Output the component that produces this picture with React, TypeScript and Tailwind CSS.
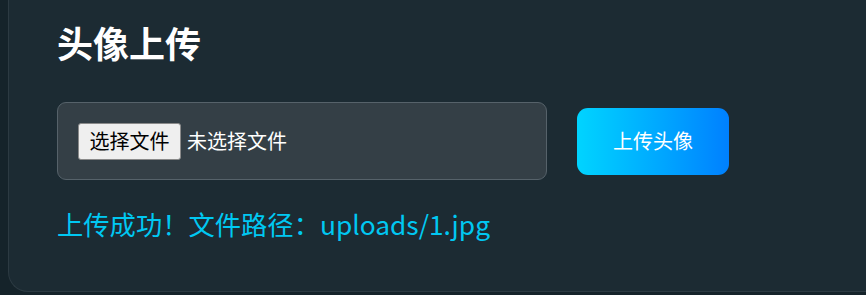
import React from "react";

export default function App() {
  const font = { fontFamily: '"Noto Sans CJK SC", "Noto Sans", sans-serif' };
  return (
    <div
      className="h-[295px] w-[866px] overflow-hidden bg-[#15232a] pl-2"
      style={font}
    >
      <div className="h-[292px] w-[900px] rounded-bl-[20px] border-b border-l border-[#2c3a42] bg-[#1c2b33] pl-[48px] pt-[18px]">
        <h1 className="text-[36px] font-bold leading-[48px] text-white">头像上传</h1>
        <div className="mt-[36px] flex items-center">
          <div className="flex h-[78px] w-[490px] items-center rounded-[9px] border border-[#56626a] bg-[#343f46] pl-[20px]">
            <div className="flex h-[37px] w-[103px] items-center justify-center rounded-[3px] border border-[#8a8a8a] bg-[#efefef] text-[20px] text-black">
              选择文件
            </div>
            <span className="ml-[6px] text-[20px] text-white">未选择文件</span>
          </div>
          <button className="ml-[30px] flex h-[67px] w-[152px] items-center justify-center rounded-[11px] bg-gradient-to-r from-[#00d4ff] to-[#0080ff] text-[20px] text-white">
            上传头像
          </button>
        </div>
        <p className="mt-[24px] text-[26.3px] leading-[40px] text-[#00c8f2]">
          上传成功！文件路径：uploads/1.jpg
        </p>
      </div>
    </div>
  );
}
